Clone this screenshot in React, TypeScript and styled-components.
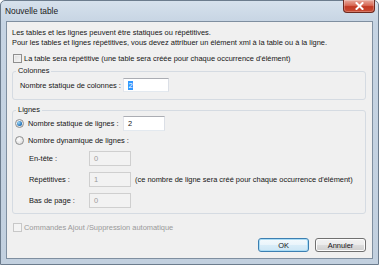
import React from "react";
import styled, { createGlobalStyle, css } from "styled-components";

const Global = createGlobalStyle`
  html, body { margin: 0; padding: 0; background: #ffffff; }
  body { font-family: "Liberation Sans", Arial, sans-serif; }
  * { box-sizing: border-box; }
`;

const Window = styled.div`
  width: 379px;
  height: 265px;
  border: 1px solid #6c7c8d;
  border-radius: 5px 5px 0 0;
  background: linear-gradient(180deg, #d6e1ec 0px, #c6d4e3 22px, #c2d0df 100%);
  padding: 0 5px 5px 5px;
  display: flex;
  flex-direction: column;
  font-family: "Liberation Sans", Arial, sans-serif;
`;

const TitleBar = styled.div`
  height: 20px;
  display: flex;
  align-items: flex-start;
  justify-content: space-between;
  margin-right: -2px;
`;

const Title = styled.div`
  font-size: 8.4px;
  line-height: 20px;
  color: #1a1a1a;
  margin-left: -1px;
`;

const CloseButton = styled.div`
  width: 32px;
  height: 13px;
  margin-top: -1px;
  border: 1px solid #6e2a20;
  border-top: none;
  border-radius: 0 0 4px 4px;
  background: linear-gradient(180deg, #e8a99c 0%, #d86a56 45%, #c23a24 55%, #c94c34 100%);
  display: flex;
  align-items: center;
  justify-content: center;
  box-shadow: inset 0 0 0 1px rgba(255, 255, 255, 0.25);
`;

const Content = styled.div`
  flex: 1;
  background: #f0f0f0;
  border: 1px solid #7f8fa0;
  padding: 6px 6px 0 5px;
  display: flex;
  flex-direction: column;
  font-size: 7.45px;
  color: #161616;
`;

const Paragraph = styled.p`
  margin: 0;
  line-height: 10px;
  white-space: nowrap;
`;

const CheckRow = styled.label<{ $disabled?: boolean; $mt: number }>`
  display: flex;
  align-items: center;
  height: 12px;
  margin-top: ${(p) => p.$mt}px;
  gap: 2px;
  white-space: nowrap;
  color: ${(p) => (p.$disabled ? "#9a9a9a" : "#161616")};
`;

const CheckBox = styled.span<{ $disabled?: boolean }>`
  flex-shrink: 0;
  width: 9px;
  height: 9px;
  margin-left: 1px;
  border: 1px solid ${(p) => (p.$disabled ? "#c8c8c8" : "#8f8f8f")};
  background: ${(p) =>
    p.$disabled ? "#f4f4f4" : "linear-gradient(135deg, #dcdcdc, #f8f8f8)"};
  box-shadow: inset 0 0 0 1px ${(p) => (p.$disabled ? "#f4f4f4" : "#f0f0f0")};
`;

const Group = styled.fieldset<{ $mt: number; $pb: number }>`
  margin: ${(p) => p.$mt}px 0 0 0;
  padding: 0 0 ${(p) => p.$pb}px 0;
  border: 1px solid #d5dbe2;
  border-radius: 3px;
  min-width: 0;
`;

const Legend = styled.legend`
  padding: 0 2px;
  margin-left: 3px;
  line-height: 10px;
  font-size: 7.45px;
  color: #161616;
`;

const FieldRow = styled.div<{ $mt: number; $h: number; $label: number; $pl: number }>`
  display: grid;
  grid-template-columns: ${(p) => p.$label}px auto 1fr;
  align-items: center;
  height: ${(p) => p.$h}px;
  margin-top: ${(p) => p.$mt}px;
  padding-left: ${(p) => p.$pl}px;
  white-space: nowrap;
`;

const RadioLabel = styled.span`
  display: flex;
  align-items: center;
  gap: 4px;
`;

const Radio = styled.span<{ $checked?: boolean }>`
  flex-shrink: 0;
  width: 9px;
  height: 9px;
  border-radius: 50%;
  border: 1px solid #8e8f8f;
  background: radial-gradient(circle at 40% 35%, #ffffff, #d4d4d4);
  display: flex;
  align-items: center;
  justify-content: center;
  ${(p) =>
    p.$checked &&
    css`
      &::after {
        content: "";
        width: 5px;
        height: 5px;
        border-radius: 50%;
        background: radial-gradient(circle at 35% 35%, #9fd6f5, #1c6fb8 70%, #15509a);
      }
    `}
`;

const Input = styled.div<{ $w: number; $h: number; $disabled?: boolean }>`
  width: ${(p) => p.$w}px;
  height: ${(p) => p.$h}px;
  border: 1px solid;
  border-color: ${(p) =>
    p.$disabled ? "#cfcfcf" : "#abadb3 #dbdfe6 #e3e9ef #e2e3ea"};
  background: ${(p) => (p.$disabled ? "#f2f2f2" : "#ffffff")};
  color: ${(p) => (p.$disabled ? "#9a9a9a" : "#161616")};
  display: flex;
  align-items: center;
  padding-left: 4px;
  font-size: 7.45px;
`;

const Selected = styled.span`
  background: #3399ff;
  color: #ffffff;
  line-height: 9px;
  padding: 0 0.5px;
`;

const Note = styled.span`
  padding-left: 4px;
`;

const ButtonRow = styled.div`
  display: flex;
  justify-content: flex-end;
  gap: 6px;
  margin-top: 5px;
`;

const Button = styled.div<{ $default?: boolean }>`
  width: 51px;
  height: 14px;
  border: 1px solid ${(p) => (p.$default ? "#3c7fb1" : "#707070")};
  border-radius: 3px;
  background: ${(p) =>
    p.$default
      ? "linear-gradient(180deg, #f4fafd 0%, #e9f4fb 50%, #d9edf8 50%, #cde6f5 100%)"
      : "linear-gradient(180deg, #f2f2f2 0%, #ebebeb 50%, #dddddd 50%, #cfcfcf 100%)"};
  box-shadow: inset 0 0 0 1px ${(p) => (p.$default ? "#a9dcf6" : "#fcfcfc")};
  display: flex;
  align-items: center;
  justify-content: center;
  font-size: 7.45px;
  color: #161616;
`;

export default function App() {
  return (
    <>
      <Global />
      <Window>
        <TitleBar>
          <Title>Nouvelle table</Title>
          <CloseButton>
            <svg width="9" height="8" viewBox="0 0 9 8">
              <path d="M1.5 1 L7.5 7 M7.5 1 L1.5 7" stroke="#ffffff" strokeWidth="2" strokeLinecap="square" />
            </svg>
          </CloseButton>
        </TitleBar>
        <Content>
          <Paragraph>
            Les tables et les lignes peuvent être statiques ou répétitives.
            <br />
            Pour les tables et lignes répétitives, vous devez attribuer un élément xml à la table ou à la ligne.
          </Paragraph>
          <CheckRow $mt={4}>
            <CheckBox />
            La table sera répétitive (une table sera créée pour chaque occurrence d'élément)
          </CheckRow>
          <Group $mt={2} $pb={7}>
            <Legend>Colonnes</Legend>
            <FieldRow $mt={2} $h={14} $label={103} $pl={7}>
              <span>Nombre statique de colonnes :</span>
              <Input $w={46} $h={14}>
                <Selected>2</Selected>
              </Input>
            </FieldRow>
          </Group>
          <Group $mt={5} $pb={5}>
            <Legend>Lignes</Legend>
            <FieldRow $mt={1} $h={15} $label={108} $pl={2}>
              <RadioLabel>
                <Radio $checked />
                Nombre statique de lignes :
              </RadioLabel>
              <Input $w={42} $h={15}>2</Input>
            </FieldRow>
            <FieldRow $mt={3} $h={12} $label={108} $pl={2}>
              <RadioLabel>
                <Radio />
                Nombre dynamique de lignes :
              </RadioLabel>
            </FieldRow>
            <FieldRow $mt={5} $h={15} $label={60} $pl={16}>
              <span>En-tête :</span>
              <Input $w={42} $h={15} $disabled>0</Input>
            </FieldRow>
            <FieldRow $mt={6} $h={15} $label={60} $pl={16}>
              <span>Répétitives :</span>
              <Input $w={42} $h={15} $disabled>1</Input>
              <Note>(ce nombre de ligne sera créé pour chaque occurrence d'élément)</Note>
            </FieldRow>
            <FieldRow $mt={6} $h={15} $label={60} $pl={16}>
              <span>Bas de page :</span>
              <Input $w={42} $h={15} $disabled>0</Input>
            </FieldRow>
          </Group>
          <CheckRow $mt={7} $disabled>
            <CheckBox $disabled />
            Commandes Ajout /Suppression automatique
          </CheckRow>
          <ButtonRow>
            <Button $default>OK</Button>
            <Button>Annuler</Button>
          </ButtonRow>
        </Content>
      </Window>
    </>
  );
}
